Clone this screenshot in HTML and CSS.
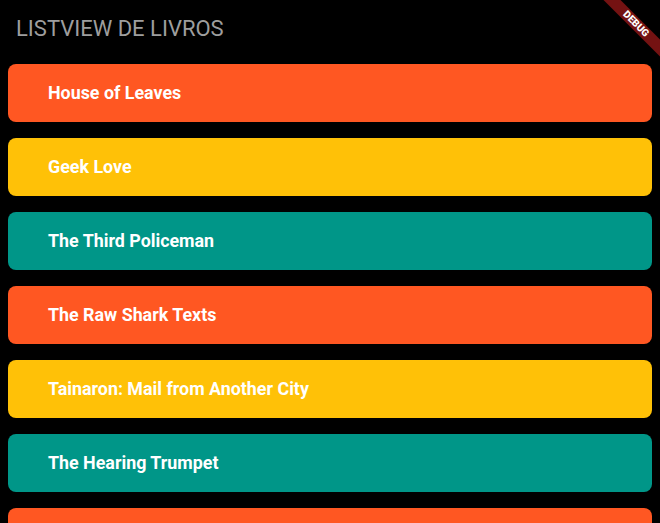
FILE: index.html
```html
<!DOCTYPE html>
<html>
<head>
<meta charset="utf-8">
<link rel="stylesheet" href="styles.css">
</head>
<body>
<div class="app">
  <header class="appbar"><h1 class="title">LISTVIEW DE LIVROS</h1></header>
  <ul class="list">
    <li class="card orange">House of Leaves</li>
    <li class="card amber">Geek Love</li>
    <li class="card teal">The Third Policeman</li>
    <li class="card orange">The Raw Shark Texts</li>
    <li class="card amber">Tainaron: Mail from Another City</li>
    <li class="card teal">The Hearing Trumpet</li>
    <li class="card orange"></li>
  </ul>
  <div class="banner">DEBUG</div>
</div>
</body>
</html>
```
FILE: styles.css
```css
html, body {
  margin: 0;
  padding: 0;
  background: #000;
  overflow: hidden;
}
.app {
  position: relative;
  width: 660px;
  height: 523px;
  overflow: hidden;
  font-family: Roboto, "Liberation Sans", sans-serif;
}
.appbar {
  height: 56px;
  display: flex;
  align-items: center;
  padding: 0 16px;
}
.title {
  margin: 0;
  font-size: 22px;
  font-weight: 400;
  color: #9e9e9e;
  letter-spacing: 0;
}
.list {
  list-style: none;
  margin: 0;
  padding: 8px 8px 0;
  display: flex;
  flex-direction: column;
  gap: 16px;
}
.card {
  height: 58px;
  box-sizing: border-box;
  padding-bottom: 2px;
  border-radius: 8px;
  display: flex;
  align-items: center;
  padding-left: 40px;
  color: #fff;
  font-size: 17.85px;
  font-weight: 700;
  flex-shrink: 0;
}
.orange { background: #ff5722; }
.amber { background: #ffc107; }
.teal { background: #009688; }
.banner {
  position: absolute;
  left: 596px;
  top: 18px;
  width: 80px;
  height: 12px;
  transform: rotate(45deg);
  background: rgba(183, 28, 28, 0.63);
  color: #fff;
  font-size: 10px;
  font-weight: 900;
  line-height: 12px;
  text-align: center;
  box-shadow: 0 0 6px rgba(0,0,0,0.5);
}
```
